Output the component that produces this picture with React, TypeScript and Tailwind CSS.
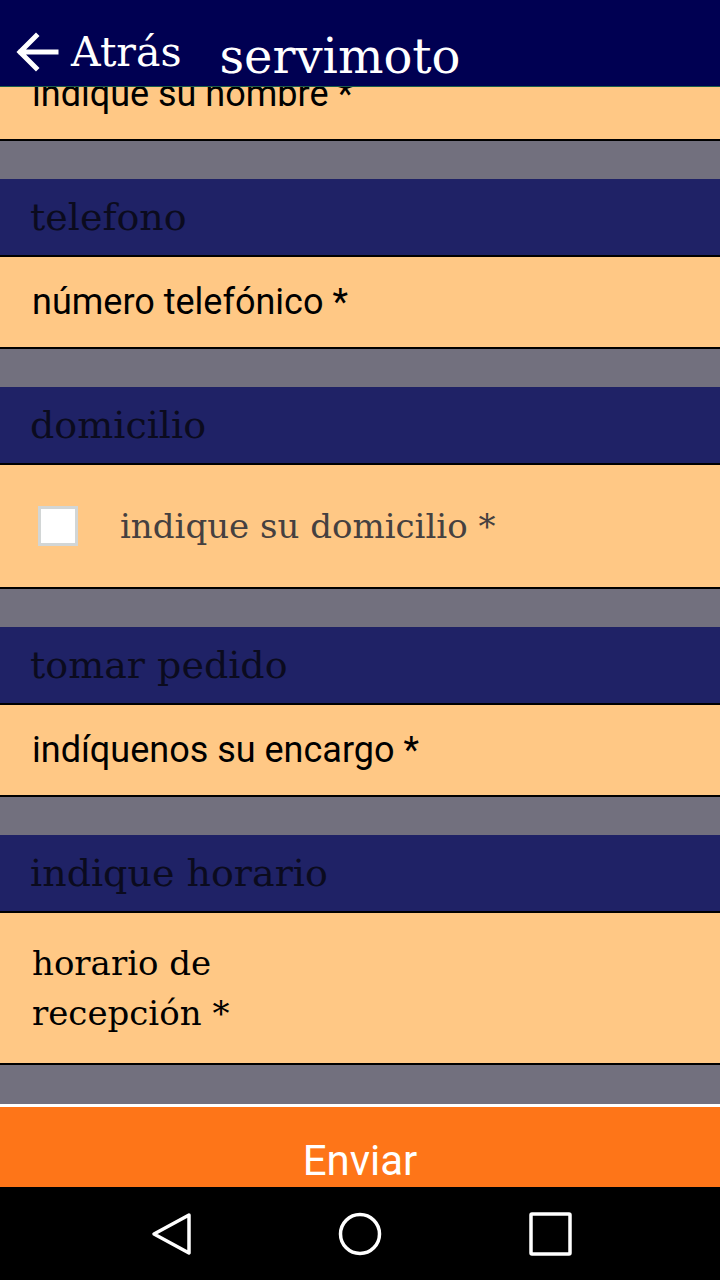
const serif = "font-['DejaVu_Serif','Liberation_Serif',serif]";
const sans = "font-['Roboto','Liberation_Sans',sans-serif]";

const Label = ({ text }: { text: string }) => (
  <div className={`h-[76px] bg-[#1f2266] flex items-center px-[30px] text-[38px] text-[#0b0b1e] ${serif}`}>
    {text}
  </div>
);

const Gap = () => <div className="h-[38px] bg-[#72707e]" />;

const TextInput = ({ text }: { text: string }) => (
  <div className={`h-[94px] bg-[#ffc885] border-y-2 border-black flex items-center px-[32px] text-[36px] text-black ${sans}`}>
    {text}
  </div>
);

const App = () => {
  return (
    <div className="w-[720px] h-[1280px] flex flex-col bg-black overflow-hidden">
      {/* action bar */}
      <div className="h-[87px] shrink-0 bg-[#000052] border-b border-[#1b5e4a] flex items-start text-white">
        <svg width="44" height="42" viewBox="0 0 44 42" className="ml-[15px] mt-[31px]" fill="none" stroke="white" strokeWidth="5" strokeLinecap="square">
          <path d="M41 21H6M21 5L5 21l16 16" />
        </svg>
        <span className={`ml-[12px] mt-[32px] text-[41px] leading-none ${serif}`}>Atrás</span>
        <span className={`ml-[38px] mt-[32px] text-[48px] leading-none ${serif}`}>servimoto</span>
      </div>

      {/* form */}
      <div className="flex-1 overflow-hidden bg-[#72707e]">
        <div className="mt-[-116px]">
          <Label text="nombre" />
          <TextInput text="indique su nombre *" />
          <Gap />
          <Label text="telefono" />
          <TextInput text="número telefónico *" />
          <Gap />
          <Label text="domicilio" />
          <div className={`h-[126px] bg-[#ffc885] border-y-2 border-black flex items-center px-[38px] ${serif}`}>
            <div className="w-[40px] h-[40px] bg-white border-[3px] border-[#d2d6d6]" />
            <span className="ml-[42px] text-[34px] text-[#454040]">indique su domicilio *</span>
          </div>
          <Gap />
          <Label text="tomar pedido" />
          <TextInput text="indíquenos su encargo *" />
          <Gap />
          <Label text="indique horario" />
          <div className={`h-[154px] bg-[#ffc885] border-y-2 border-black flex items-center px-[32px] text-[34px] leading-[50px] text-black ${serif}`}>
            <div className="w-[240px]">horario de recepción *</div>
          </div>
          <Gap />
        </div>
      </div>

      {/* send button */}
      <div className="h-[83px] shrink-0 border-t-[3px] border-white bg-[#fe7518] flex justify-center items-start pt-[33px]">
        <span className={`text-white text-[42px] leading-none ${sans}`}>Enviar</span>
      </div>

      {/* nav bar */}
      <div className="h-[93px] shrink-0 bg-black flex items-center justify-center gap-[146px]">
        <svg width="44" height="46" viewBox="0 0 44 46" fill="none" stroke="white" strokeWidth="3.5" strokeLinejoin="round">
          <path d="M41 4L6 23l35 19z" />
        </svg>
        <svg width="44" height="44" viewBox="0 0 44 44" fill="none" stroke="white" strokeWidth="3.5">
          <circle cx="22" cy="22" r="19.5" />
        </svg>
        <svg width="44" height="44" viewBox="0 0 44 44" fill="none" stroke="white" strokeWidth="3.5">
          <rect x="3" y="2" width="39" height="40" rx="1" />
        </svg>
      </div>
    </div>
  );
};

export default App;
